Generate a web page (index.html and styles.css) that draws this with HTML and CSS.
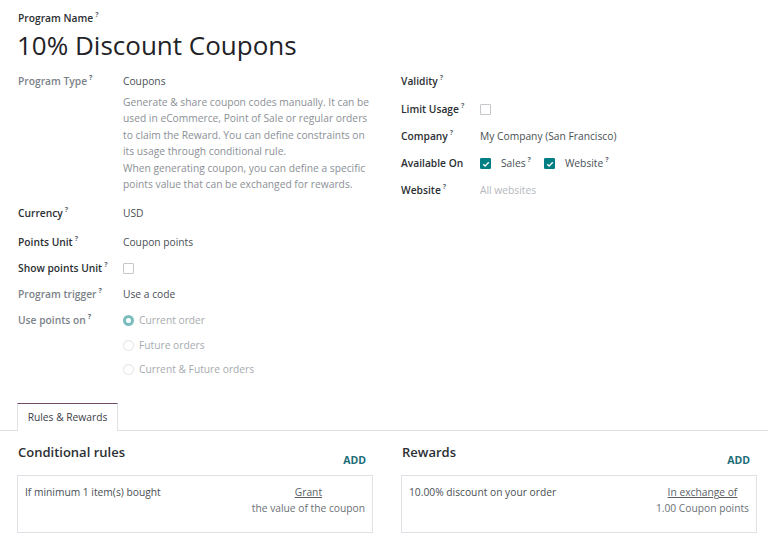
FILE: index.html
```html
<!DOCTYPE html>
<html>
<head>
<meta charset="utf-8">
<link rel="stylesheet" href="styles.css">
</head>
<body>
<div class="sheet">
  <div class="name-label">Program Name<sup class="q">?</sup></div>
  <h1 class="title">10% Discount Coupons</h1>

  <div class="groups">
    <div class="group left">
      <div class="row first">
        <div class="label muted">Program Type<sup class="q">?</sup></div>
        <div class="value">
          <div>Coupons</div>
          <div class="desc">Generate &amp; share coupon codes manually. It can be used in eCommerce, Point of Sale or regular orders to claim the Reward. You can define constraints on its usage through conditional rule.<br>When generating coupon, you can define a specific points value that can be exchanged for rewards.</div>
        </div>
      </div>
      <div class="row currency">
        <div class="label">Currency<sup class="q">?</sup></div>
        <div class="value">USD</div>
      </div>
      <div class="row">
        <div class="label">Points Unit<sup class="q">?</sup></div>
        <div class="value">Coupon points</div>
      </div>
      <div class="row">
        <div class="label">Show points Unit<sup class="q">?</sup></div>
        <div class="value"><span class="check"></span></div>
      </div>
      <div class="row">
        <div class="label muted">Program trigger<sup class="q">?</sup></div>
        <div class="value">Use a code</div>
      </div>
      <div class="row">
        <div class="label muted">Use points on<sup class="q">?</sup></div>
        <div class="value radios">
          <div class="radio-item"><span class="radio on"></span>Current order</div>
          <div class="radio-item"><span class="radio"></span>Future orders</div>
          <div class="radio-item"><span class="radio"></span>Current &amp; Future orders</div>
        </div>
      </div>
    </div>

    <div class="group right">
      <div class="row validity">
        <div class="label">Validity<sup class="q">?</sup></div>
        <div class="value"></div>
      </div>
      <div class="row">
        <div class="label">Limit Usage<sup class="q">?</sup></div>
        <div class="value"><span class="check"></span></div>
      </div>
      <div class="row">
        <div class="label">Company<sup class="q">?</sup></div>
        <div class="value">My Company (San Francisco)</div>
      </div>
      <div class="row">
        <div class="label">Available On</div>
        <div class="value inline">
          <span class="check on"><svg viewBox="0 0 12 12" width="12" height="12"><path d="M3.2 6.2 L5.1 8 L8.8 4.2" fill="none" stroke="#fff" stroke-width="1.4"/></svg></span>
          <span class="opt">Sales<sup class="q">?</sup></span>
          <span class="check on"><svg viewBox="0 0 12 12" width="12" height="12"><path d="M3.2 6.2 L5.1 8 L8.8 4.2" fill="none" stroke="#fff" stroke-width="1.4"/></svg></span>
          <span class="opt">Website<sup class="q">?</sup></span>
        </div>
      </div>
      <div class="row">
        <div class="label">Website<sup class="q">?</sup></div>
        <div class="value placeholder">All websites</div>
      </div>
    </div>
  </div>

  <div class="tabs">
    <div class="tab">Rules &amp; Rewards</div>
  </div>

  <div class="panels">
    <div class="panel">
      <div class="panel-head">
        <h2>Conditional rules</h2>
        <span class="add">ADD</span>
      </div>
      <div class="card">
        <div class="card-text">If minimum 1 item(s) bought</div>
        <div class="card-side">
          <div class="link">Grant</div>
          <div>the value of the coupon</div>
        </div>
      </div>
    </div>
    <div class="panel">
      <div class="panel-head">
        <h2>Rewards</h2>
        <span class="add">ADD</span>
      </div>
      <div class="card">
        <div class="card-text">10.00% discount on your order</div>
        <div class="card-side">
          <div class="link">In exchange of</div>
          <div>1.00 Coupon points</div>
        </div>
      </div>
    </div>
  </div>
</div>
</body>
</html>
```

FILE: styles.css
```css
* { box-sizing: border-box; }
html, body { margin: 0; padding: 0; background: #fff; }
body {
  font-family: "Open Sans", "Noto Sans", sans-serif;
  font-size: 10.25px;
  color: #4a4f55;
}
.sheet { padding: 10px 0 0 0; }
.name-label {
  padding-left: 18px;
  font-weight: 600;
  color: #2b2f33;
  line-height: 17px;
}
.q {
  font-size: 7px;
  color: #5f6a75;
  font-weight: 700;
  margin-left: 2px;
  vertical-align: 5px;
  line-height: 0;
}
.title {
  margin: 0;
  padding-left: 17px;
  font-size: 26px;
  font-weight: 400;
  color: #1f2328;
  line-height: 36px;
}
.groups {
  display: grid;
  grid-template-columns: 357px 357px;
  column-gap: 26px;
  padding: 10px 18px 0 18px;
}
.row {
  display: flex;
  line-height: 17px;
  min-height: 17px;
  margin-bottom: 9px;
}
.right .row { margin-bottom: 10px; }
.right .row.validity { margin-bottom: 11px; }
.row.first { margin-bottom: 13px; }
.row.currency { margin-bottom: 12px; }
.left .label { width: 105px; flex: none; }
.right .label { width: 79px; flex: none; }
.label {
  font-weight: 600;
  color: #2b2f33;
}
.label.muted { color: #7b8289; }
.value { flex: 1; color: #4a4f55; }
.desc { color: #8b9096; margin-top: 4px; line-height: 16.4px; max-width: 249px; }
.placeholder { color: #b4b8bd; }
.check {
  display: inline-block;
  width: 11px;
  height: 11px;
  border: 1px solid #c4c8cc;
  border-radius: 1px;
  vertical-align: -2px;
  background: #fff;
}
.check.on {
  background: #017e84;
  border-color: #017e84;
  position: relative;
}
.check.on svg { position: absolute; left: -1px; top: -1px; }
.inline { display: flex; align-items: center; }
.inline .check { margin-right: 10px; }
.inline .opt { margin-right: 13px; }
.radios .radio-item { color: #a6abb0; height: 17px; margin-bottom: 7.5px; display: flex; align-items: center; }
.radios .radio-item:last-child { margin-bottom: 0; }
.radio {
  display: inline-block;
  width: 11px;
  height: 11px;
  border-radius: 50%;
  border: 1px solid #dfe2e5;
  margin-right: 5px;
  flex: none;
}
.radio.on {
  border: 3px solid #7bbcbf;
  background: #fff;
}
.tabs {
  margin-top: 16px;
  border-bottom: 1px solid #dee2e6;
  padding-left: 17px;
  display: flex;
  height: 28px;
}
.tab {
  width: 101px;
  border: 1px solid #dee2e6;
  border-top: 1px solid #714b67;
  border-bottom: none;
  background: #fff;
  color: #3d4247;
  text-align: center;
  line-height: 26px;
  height: 28px;
  margin-bottom: -1px;
}
.panels {
  display: grid;
  grid-template-columns: 356px 356px;
  column-gap: 28px;
  padding: 12px 11px 0 17px;
}
.panel-head {
  display: flex;
  justify-content: space-between;
  align-items: flex-start;
  padding-left: 1px;
  padding-right: 7px;
  height: 32px;
}
.panel-head h2 {
  margin: 0;
  font-size: 13px;
  font-weight: 600;
  color: #2b2f33;
  line-height: 18px;
}
.add {
  margin-top: 9px;
  font-weight: 700;
  color: #1b6d78;
  font-size: 10.5px;
  line-height: 16px;
}
.card {
  border: 1px solid #dee2e6;
  height: 58px;
  padding: 8px 7px 0 7px;
  display: flex;
  justify-content: space-between;
  line-height: 16px;
}
.card-text { color: #4a4f55; }
.card-side { text-align: center; color: #6b7177; }
.card-side .link { text-decoration: underline; color: #5a5f64; }
```
